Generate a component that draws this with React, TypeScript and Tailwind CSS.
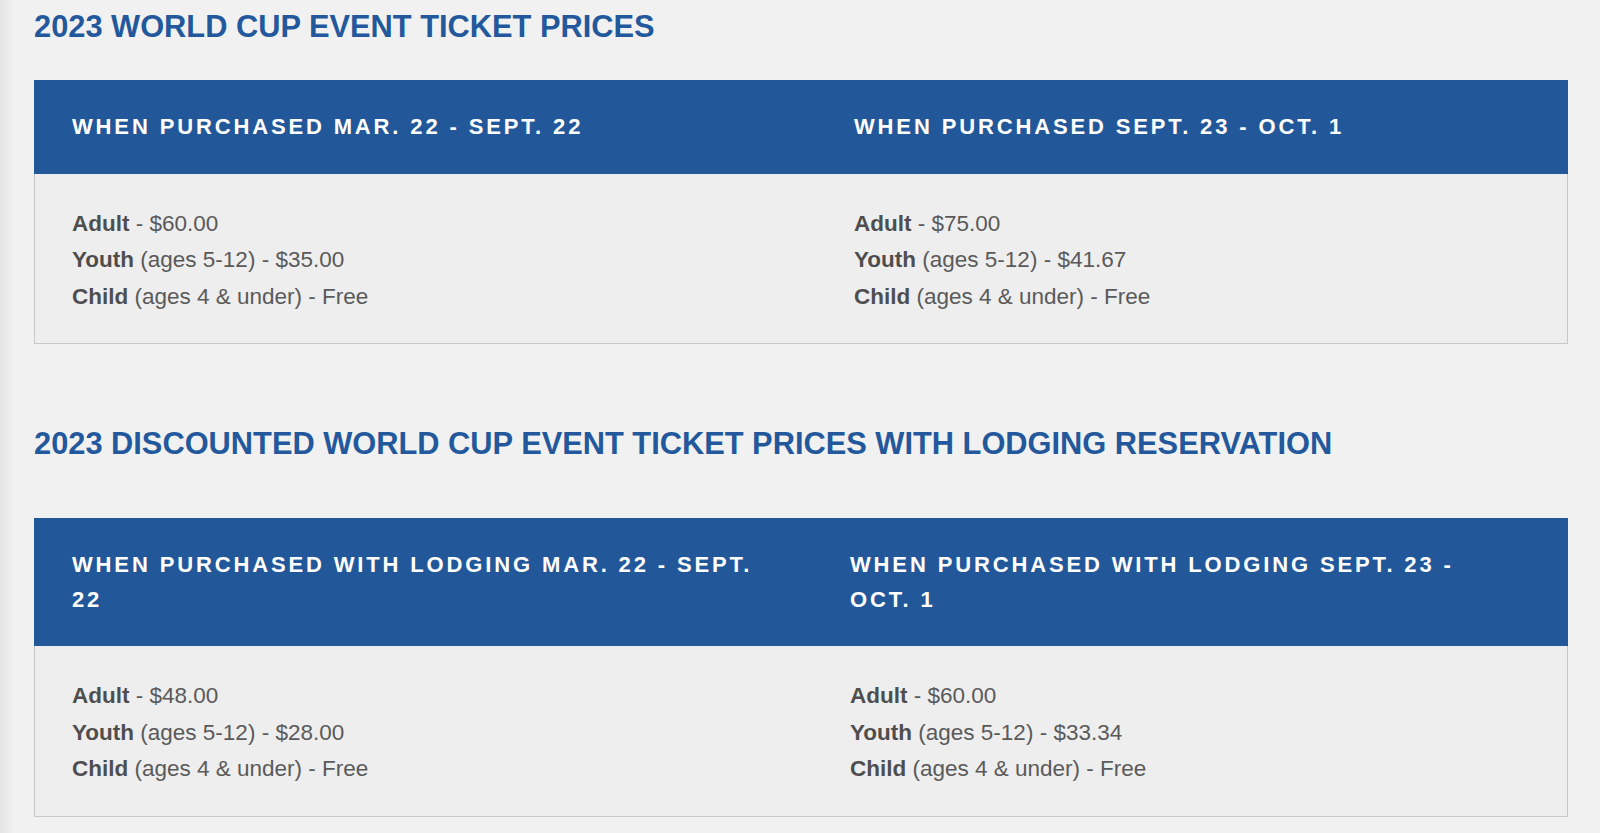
type Price = { label: string; note?: string; price: string };

type Column = { heading: string; prices: Price[] };

type Table = { title: string; firstCol: string; titleGap: string; columns: Column[] };

const TABLES: Table[] = [
  {
    title: "2023 WORLD CUP EVENT TICKET PRICES",
    firstCol: "grid-cols-[782px_1fr]",
    titleGap: "mb-[35px]",
    columns: [
      {
        heading: "WHEN PURCHASED MAR. 22 - SEPT. 22",
        prices: [
          { label: "Adult", price: "$60.00" },
          { label: "Youth", note: "(ages 5-12)", price: "$35.00" },
          { label: "Child", note: "(ages 4 & under)", price: "Free" },
        ],
      },
      {
        heading: "WHEN PURCHASED SEPT. 23 - OCT. 1",
        prices: [
          { label: "Adult", price: "$75.00" },
          { label: "Youth", note: "(ages 5-12)", price: "$41.67" },
          { label: "Child", note: "(ages 4 & under)", price: "Free" },
        ],
      },
    ],
  },
  {
    title: "2023 DISCOUNTED WORLD CUP EVENT TICKET PRICES WITH LODGING RESERVATION",
    firstCol: "grid-cols-[778px_1fr]",
    titleGap: "mb-[56px]",
    columns: [
      {
        heading: "WHEN PURCHASED WITH LODGING MAR. 22 - SEPT. 22",
        prices: [
          { label: "Adult", price: "$48.00" },
          { label: "Youth", note: "(ages 5-12)", price: "$28.00" },
          { label: "Child", note: "(ages 4 & under)", price: "Free" },
        ],
      },
      {
        heading: "WHEN PURCHASED WITH LODGING SEPT. 23 - OCT. 1",
        prices: [
          { label: "Adult", price: "$60.00" },
          { label: "Youth", note: "(ages 5-12)", price: "$33.34" },
          { label: "Child", note: "(ages 4 & under)", price: "Free" },
        ],
      },
    ],
  },
];

function PriceTable({ table }: { table: Table }) {
  return (
    <section>
      <h2
        className={`text-[30.8px] leading-[37px] font-bold text-[#23599c] ${table.titleGap}`}
      >
        {table.title}
      </h2>

      {/* Header row — blue band */}
      <div className={`grid ${table.firstCol} bg-[#22589a]`}>
        {table.columns.map((col, i) => (
          <div
            key={col.heading}
            className={`pl-[38px] ${i === 0 ? "pr-[38px]" : "pr-[80px]"} pt-[30px] pb-[29px] text-[22px] leading-[34.5px] font-bold tracking-[0.13em] text-white`}
          >
            {col.heading}
          </div>
        ))}
      </div>

      {/* Body row */}
      <div
        className={`grid ${table.firstCol} bg-[#eeeeee] border-x border-b border-[#c8c8c8]`}
      >
        {table.columns.map((col) => (
          <div
            key={col.heading}
            className="pl-[37px] pr-[38px] pt-[32px] pb-[28px] text-[22.5px] leading-[36.5px] text-[#5a5a5a]"
          >
            {col.prices.map((p) => (
              <p key={p.label}>
                <span className="font-bold text-[#4e4e4e]">{p.label}</span>
                {p.note ? ` ${p.note}` : ""} - {p.price}
              </p>
            ))}
          </div>
        ))}
      </div>
    </section>
  );
}

export default function App() {
  return (
    <div className="min-h-screen w-full bg-[linear-gradient(to_right,#e3e3e3,#f1f1f1_14px)] pl-[34px] pr-[32px] pt-[8px] font-['Liberation_Sans',Arial,sans-serif]">
      <PriceTable table={TABLES[0]} />
      <div className="h-[81px]" />
      <PriceTable table={TABLES[1]} />
    </div>
  );
}
